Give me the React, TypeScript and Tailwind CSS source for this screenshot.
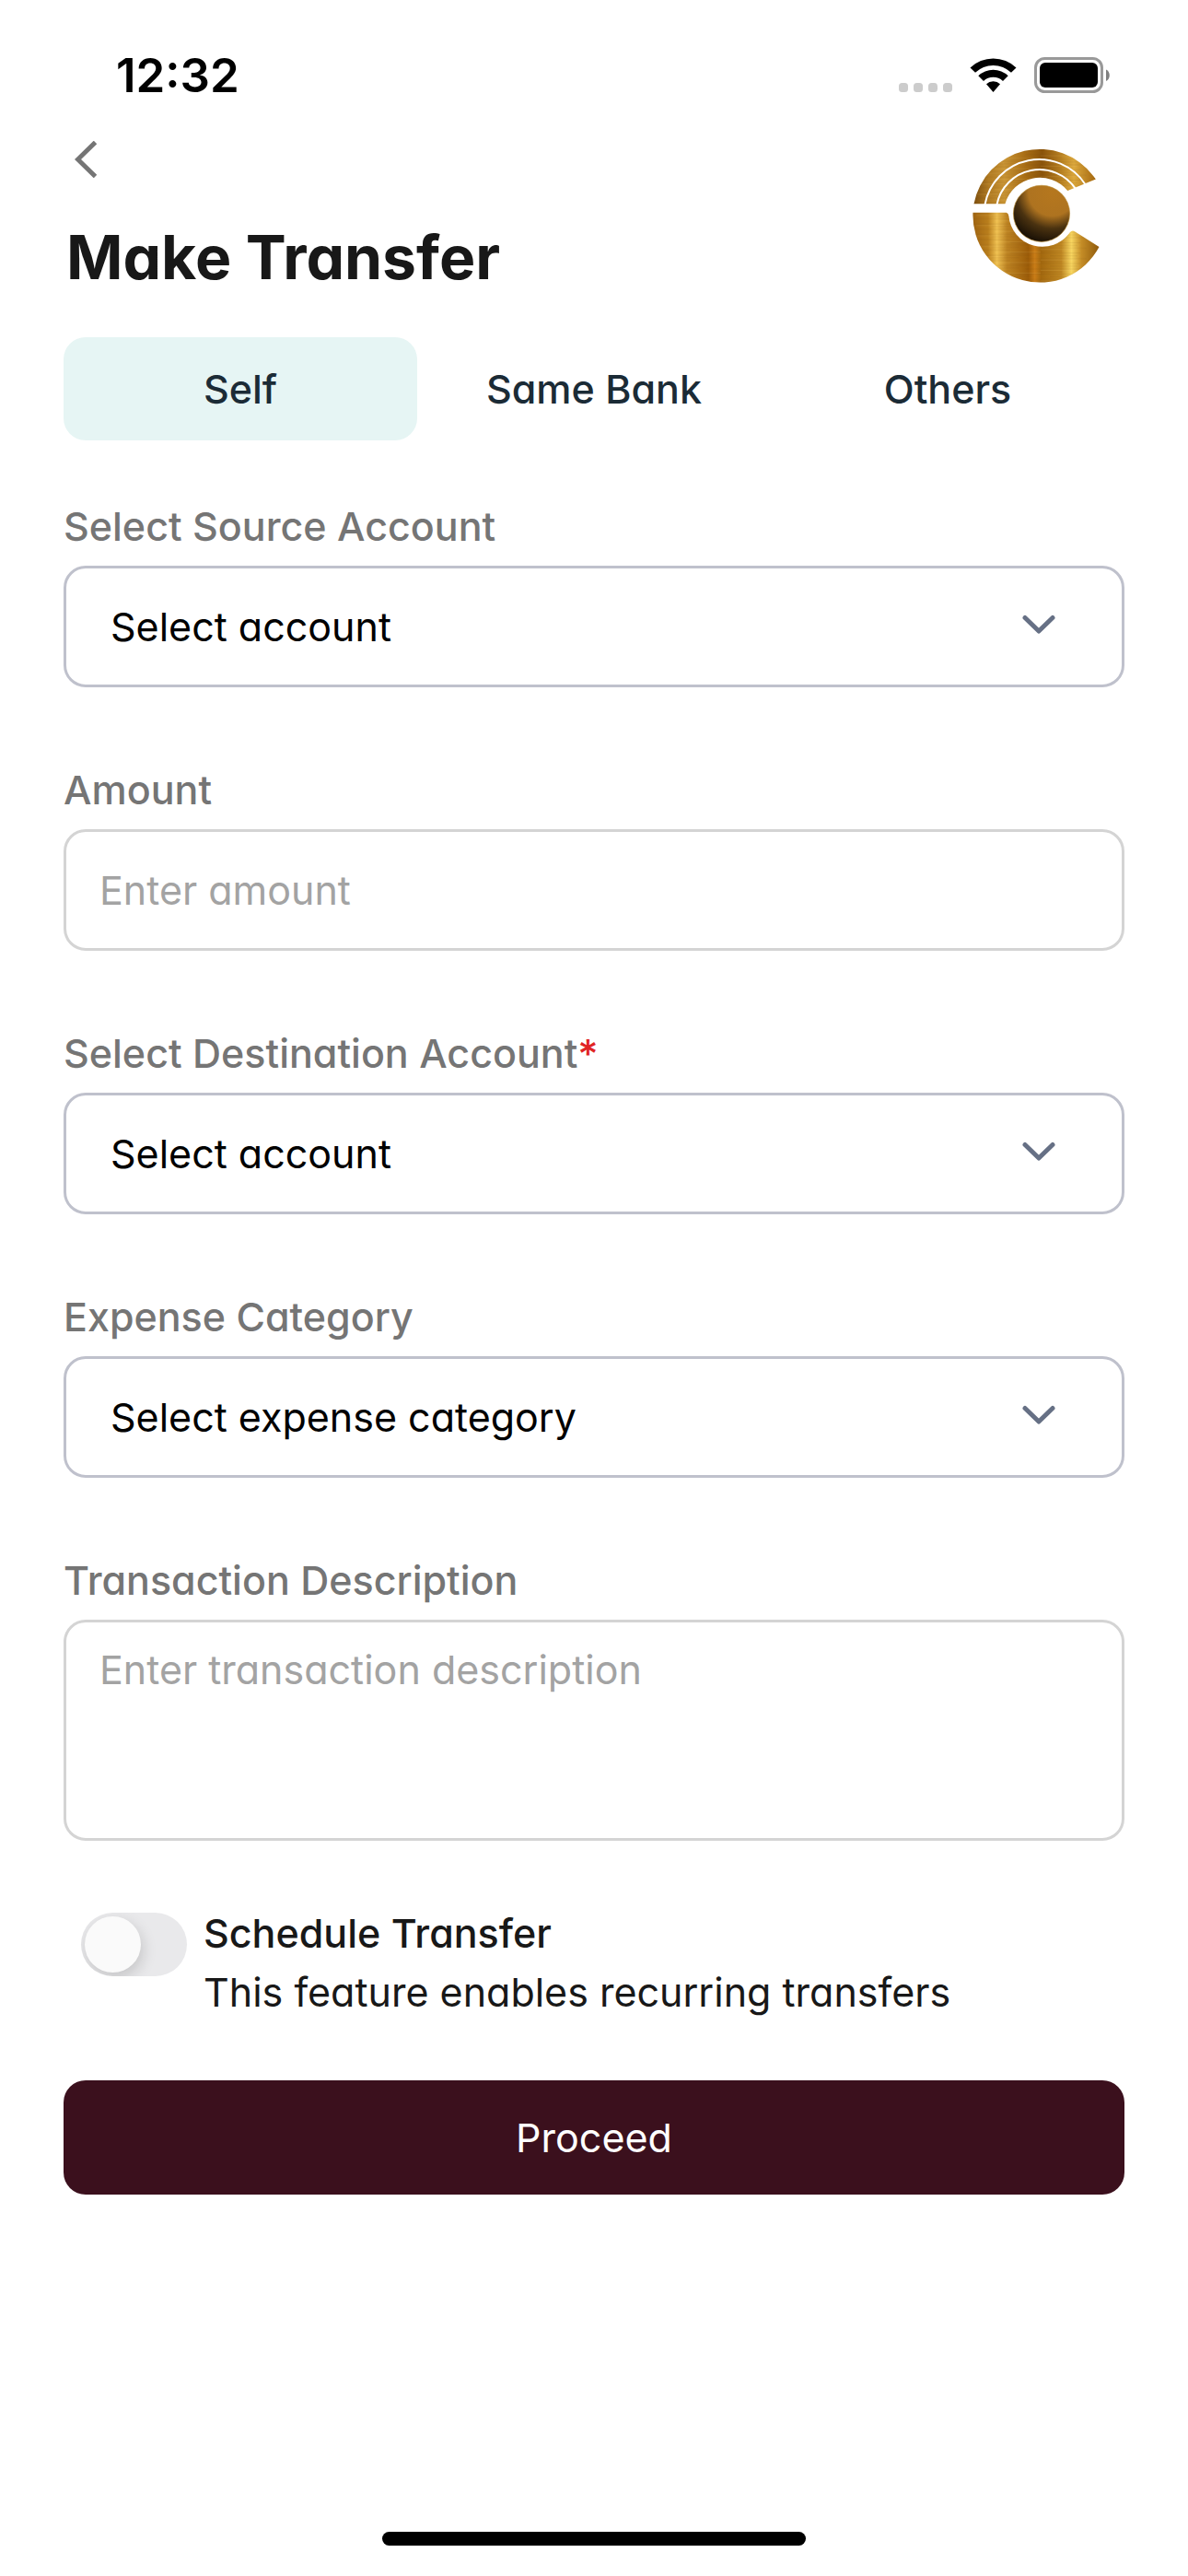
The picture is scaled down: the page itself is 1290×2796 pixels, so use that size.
import { useState } from 'react';
import type { ReactNode } from 'react';

const tabs = ['Self', 'Same Bank', 'Others'];

function StatusBar() {
  return (
    <div className="flex items-center justify-between h-[60px] mt-[52px] pl-[126px] pr-[85px]">
      <span className="text-[51px] leading-[60px] font-semibold text-black">12:32</span>
      <svg width="229" height="40" viewBox="0 0 229 40" aria-hidden="true">
        {[0, 16, 32, 48].map((x) => (
          <rect key={x} x={x} y="28" width="10" height="10" rx="3.5" fill="#cccccc" />
        ))}
        {/* Wifi */}
        <path d="M77.5 11.5a36 36 0 0 1 50 0l-5.5 5.3a28 28 0 0 0-39 0z" />
        <path d="M86.3 20.3a23.4 23.4 0 0 1 32.4 0l-5.7 5.7a15.2 15.2 0 0 0-21 0z" />
        <path d="M95 29.3a10.8 10.8 0 0 1 15 0l-7.5 8.6z" />
        {/* Battery */}
        <rect x="148.5" y="1.5" width="72" height="36" rx="10" fill="none" stroke="#999999" strokeWidth="3" />
        <rect x="153" y="6" width="63" height="27" rx="6" />
        <path d="M225 13.500c5 2 5 10.500 0 12.500z" fill="#808080" />
      </svg>
    </div>
  );
}

function Logo() {
  return (
    <svg width="150" height="153" viewBox="60 50 450 460" role="img" aria-label="Bank logo">
      <defs>
        <linearGradient id="goldTop" gradientUnits="userSpaceOnUse" x1="82" y1="0" x2="480" y2="0">
          <stop offset="0" stopColor="#7e4f0e" />
          <stop offset="0.12" stopColor="#b07a22" />
          <stop offset="0.25" stopColor="#c99434" />
          <stop offset="0.42" stopColor="#a86d14" />
          <stop offset="0.56" stopColor="#8a530a" />
          <stop offset="0.7" stopColor="#b47c1e" />
          <stop offset="0.82" stopColor="#dca83c" />
          <stop offset="1" stopColor="#a4680f" />
        </linearGradient>
        <linearGradient id="goldBottom" gradientUnits="userSpaceOnUse" x1="79" y1="0" x2="491" y2="0">
          <stop offset="0" stopColor="#a06512" />
          <stop offset="0.12" stopColor="#b97e1c" />
          <stop offset="0.19" stopColor="#efc050" />
          <stop offset="0.27" stopColor="#bd8322" />
          <stop offset="0.44" stopColor="#9c5c08" />
          <stop offset="0.49" stopColor="#c97c16" />
          <stop offset="0.54" stopColor="#a3680e" />
          <stop offset="0.7" stopColor="#bf8722" />
          <stop offset="0.78" stopColor="#f8d660" />
          <stop offset="0.86" stopColor="#c48c26" />
          <stop offset="1" stopColor="#8f5a0c" />
        </linearGradient>
        <radialGradient id="ball" gradientUnits="userSpaceOnUse" cx="338" cy="205" r="165">
          <stop offset="0" stopColor="#b5771e" />
          <stop offset="0.47" stopColor="#ae7320" />
          <stop offset="0.72" stopColor="#4a3210" />
          <stop offset="1" stopColor="#1c1206" />
        </radialGradient>
        <pattern id="brushed" width="450" height="34" patternUnits="userSpaceOnUse">
          <path d="M60 3h210M330 5h90M140 11h90M250 14h200M80 20h120M290 23h80M200 30h230" stroke="#5f3804" strokeWidth="2" opacity="0.16" />
          <path d="M90 8h90M300 18h120M150 27h150" stroke="#ffe28a" strokeWidth="2" opacity="0.16" />
        </pattern>
      </defs>
      {['url(#goldTop)', 'url(#brushed)'].map((fill) => (
        <path
          key={fill}
          d="M82 243A219 219 0 0 1 472 152L480 163L388 200A118 118 0 0 0 184 243Z"
          fill={fill}
        />
      ))}
      <path d="M118 246A180 180 0 0 1 446 180" fill="none" stroke="#ffffff" strokeWidth="6" />
      <path d="M157 246A142 142 0 0 1 414 194" fill="none" stroke="#ffffff" strokeWidth="6" />
      {['url(#goldBottom)', 'url(#brushed)'].map((fill) => (
        <path
          key={fill}
          d="M79 272H188Q195 274 196 283A110 110 0 0 0 395 337Q402 328 411 333L491 384A219 219 0 0 1 79 272Z"
          fill={fill}
        />
      ))}
      <circle cx="303" cy="275" r="92" fill="url(#ball)" stroke="#b98a30" strokeWidth="2" />
    </svg>
  );
}

function Field({ id, label, required, children }: { id: string; label: string; required?: boolean; children: ReactNode }) {
  return (
    <div className="flex flex-col">
      <label htmlFor={id} className="mb-5 text-[43px] leading-[46px] font-medium text-[#757575]">
        {label}
        {required && <span className="text-[#e02424]">*</span>}
      </label>
      {children}
    </div>
  );
}

function SelectBox({ id, placeholder }: { id: string; placeholder: string }) {
  return (
    <div className="relative">
      <select
        id={id}
        className="block w-full h-[132px] appearance-none rounded-[24px] border-[3px] border-[#bfc1cc] bg-white pl-[48px] pr-[120px] text-[43px] leading-[60px] text-black"
      >
        <option>{placeholder}</option>
      </select>
      <svg
        className="pointer-events-none absolute right-[75px] top-[53px]"
        width="36"
        height="22"
        viewBox="0 0 36 22"
        fill="none"
        stroke="#667085"
        strokeWidth="5"
        strokeLinecap="round"
        strokeLinejoin="round"
        aria-hidden="true"
      >
        <path d="M3 3.500L18 18L33 3.500" />
      </svg>
    </div>
  );
}

export default function App() {
  const [activeTab, setActiveTab] = useState('Self');
  const [scheduled, setScheduled] = useState(false);

  return (
    <div className="flex min-h-screen flex-col bg-white font-['Inter',sans-serif] [font-feature-settings:'cv11']">
      <StatusBar />

      <main className="flex flex-col px-[69px] pt-[29px]">
        {/* Header */}
        <header className="flex items-start justify-between">
          <div className="flex flex-col items-start">
            <button type="button" aria-label="Back" className="flex h-[64px] items-center pl-[12px] pr-6">
              <svg width="24" height="40" viewBox="0 0 24 40" fill="none" stroke="#757575" strokeWidth="5" aria-hidden="true">
                <path d="M22.500 1.500L3.500 20L22.500 38.500" />
              </svg>
            </button>
            <h1 className="mt-[38px] pl-[3px] text-[66px] leading-[72px] font-bold text-[#181818]">Make Transfer</h1>
          </div>
          <div className="mt-4 mr-[21px]">
            <Logo />
          </div>
        </header>

        {/* Tabs */}
        <div role="tablist" className="mt-[51px] grid grid-cols-3">
          {tabs.map((tab) => (
            <button
              key={tab}
              type="button"
              role="tab"
              aria-selected={activeTab === tab}
              onClick={() => setActiveTab(tab)}
              className={`h-[112px] rounded-[24px] text-[43px] leading-[48px] font-medium text-[#1b2b36] ${
                activeTab === tab ? 'bg-[#e6f5f4]' : ''
              }`}
            >
              {tab}
            </button>
          ))}
        </div>

        {/* Form */}
        <form className="mt-[70px] flex flex-col gap-[88px]" onSubmit={(e) => e.preventDefault()}>
          <Field id="source" label="Select Source Account">
            <SelectBox id="source" placeholder="Select account" />
          </Field>
          <Field id="amount" label="Amount">
            <input
              id="amount"
              type="text"
              inputMode="decimal"
              placeholder="Enter amount"
              className="h-[132px] rounded-[24px] border-[3px] border-[#d4d4d4] px-[36px] text-[43px] leading-[60px] placeholder:text-[#a3a3a3]"
            />
          </Field>
          <Field id="destination" label="Select Destination Account" required>
            <SelectBox id="destination" placeholder="Select account" />
          </Field>
          <Field id="category" label="Expense Category">
            <SelectBox id="category" placeholder="Select expense category" />
          </Field>
          <Field id="description" label="Transaction Description">
            <textarea
              id="description"
              placeholder="Enter transaction description"
              className="h-[240px] resize-none rounded-[24px] border-[3px] border-[#d4d4d4] px-[36px] py-[21px] text-[43px] leading-[60px] placeholder:text-[#a3a3a3]"
            />
          </Field>

          <div className="-mt-4 flex flex-col gap-[64px]">
            <div className="flex items-start gap-[18px] pl-[19px]">
              <input
                id="schedule"
                type="checkbox"
                role="switch"
                checked={scheduled}
                onChange={(e) => setScheduled(e.target.checked)}
                className="mt-[6px] h-[69px] w-[115px] shrink-0 appearance-none overflow-hidden rounded-full bg-[#e9e9eb] p-1 before:block before:size-[61px] before:rounded-full before:bg-[#fafafa] before:shadow-[2px_6px_16px_rgba(0,0,0,0.16)] checked:bg-[#3b101d] checked:before:ml-[46px]"
              />
              <label htmlFor="schedule" className="flex flex-col text-[43px] leading-[64px] text-[#181818]">
                <span className="-mt-1 font-medium">Schedule Transfer</span>
                <span>This feature enables recurring transfers</span>
              </label>
            </div>
            <button type="submit" className="h-[124px] rounded-[24px] bg-[#3b101d] text-[43px] leading-[60px] text-white">
              Proceed
            </button>
          </div>
        </form>
      </main>

      {/* Home indicator */}
      <div className="mx-auto mt-auto mb-[33px] h-[15px] w-[460px] rounded-full bg-black" />
    </div>
  );
}
